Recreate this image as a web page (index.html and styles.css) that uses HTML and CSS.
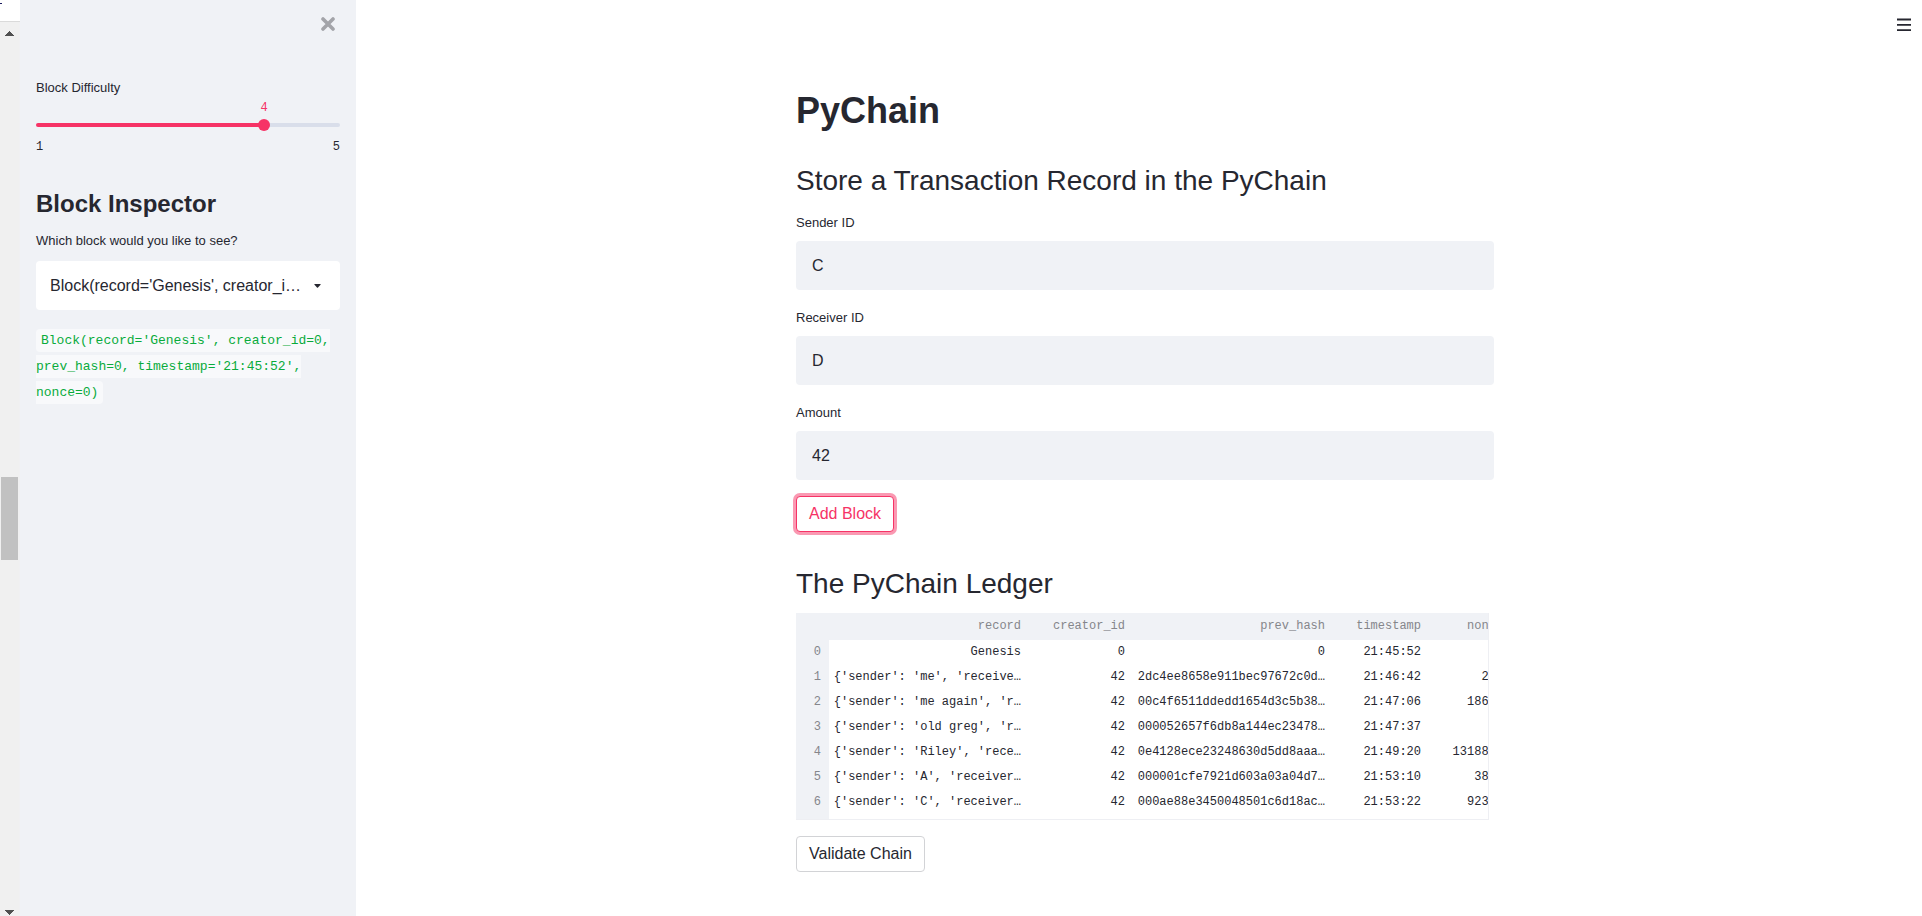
FILE: index.html
```html
<!DOCTYPE html>
<html lang="en">
<head>
<meta charset="utf-8">
<title>PyChain</title>
<link rel="stylesheet" href="styles.css">
</head>
<body>
<div class="app">
  <div class="gutter" aria-hidden="true">
    <div class="gutter-corner"><span class="gutter-mark"></span></div>
    <div class="scrollbar">
      <svg width="9" height="5" viewBox="0 0 9 5"><path d="M4 0h1v1h1v1h1v1h1v1h1v1H0V4h1V3h1V2h1V1h1z" fill="#505050"/></svg>
      <div class="scroll-before"></div>
      <div class="scroll-thumb"></div>
      <div class="scroll-after"></div>
      <svg width="9" height="5" viewBox="0 0 9 5"><path d="M0 0h9v1H8v1H7v1H6v1H5v1H4V4H3V3H2V2H1V1H0z" fill="#505050"/></svg>
    </div>
  </div>

  <aside class="sidebar">
    <div class="sidebar-top">
      <button class="icon-button" type="button" aria-label="Close sidebar">
        <svg width="14" height="14" viewBox="0 0 14 14"><path d="M2 2l10 10M12 2L2 12" stroke="#a3a4a9" stroke-width="3.6" stroke-linecap="round"/></svg>
      </button>
    </div>
    <div class="slider">
      <label class="label" for="difficulty">Block Difficulty</label>
      <div class="slider-value"><output for="difficulty">4</output></div>
      <div class="slider-rail"><input id="difficulty" type="range" min="1" max="5" value="4"></div>
      <div class="slider-ticks"><span>1</span><span>5</span></div>
    </div>
    <h2 class="sidebar-title">Block Inspector</h2>
    <label class="label" for="block">Which block would you like to see?</label>
    <div class="select-box">
      <select id="block">
        <option>Block(record='Genesis', creator_id=0, prev_hash=0, timestamp='21:45:52', nonce=0)</option>
      </select>
      <svg class="caret" width="7" height="4" viewBox="0 0 7 4"><path d="M.2.6Q.1 0 .8 0h5.4q.7 0 .6.6L4 3.6q-.5.5-1 0z" fill="#262730"/></svg>
    </div>
    <p class="code-text"><code>Block(record='Genesis', creator_id=0, prev_hash=0, timestamp='21:45:52', nonce=0)</code></p>
  </aside>

  <main class="main">
    <button class="icon-button menu" type="button" aria-label="Menu">
      <svg width="14" height="14" viewBox="0 0 14 14"><path d="M0 2.5h14M0 7.8h14M0 13.1h14" stroke="#262730" stroke-width="1.8"/></svg>
    </button>
    <div class="content">
      <h1>PyChain</h1>
      <h2 class="section-title">Store a Transaction Record in the PyChain</h2>
      <div class="field">
        <label class="label" for="sender">Sender ID</label>
        <input id="sender" type="text" value="C">
      </div>
      <div class="field">
        <label class="label" for="receiver">Receiver ID</label>
        <input id="receiver" type="text" value="D">
      </div>
      <div class="field">
        <label class="label" for="amount">Amount</label>
        <input id="amount" type="text" value="42">
      </div>
      <button class="button button-active" type="button">Add Block</button>
      <h2 class="section-title ledger-title">The PyChain Ledger</h2>
      <div class="ledger">
        <table>
          <colgroup><col class="c-index"><col class="c-long"><col class="c-id"><col class="c-long"><col class="c-time"><col class="c-nonce"></colgroup>
          <thead>
            <tr><th></th><th>record</th><th>creator_id</th><th>prev_hash</th><th>timestamp</th><th>nonce</th></tr>
          </thead>
          <tbody>
            <tr><th>0</th><td>Genesis</td><td>0</td><td>0</td><td>21:45:52</td><td>0</td></tr>
            <tr><th>1</th><td>{'sender': 'me', 'receive…</td><td>42</td><td>2dc4ee8658e911bec97672c0d…</td><td>21:46:42</td><td>206</td></tr>
            <tr><th>2</th><td>{'sender': 'me again', 'r…</td><td>42</td><td>00c4f6511ddedd1654d3c5b38…</td><td>21:47:06</td><td>18652</td></tr>
            <tr><th>3</th><td>{'sender': 'old greg', 'r…</td><td>42</td><td>000052657f6db8a144ec23478…</td><td>21:47:37</td><td>22</td></tr>
            <tr><th>4</th><td>{'sender': 'Riley', 'rece…</td><td>42</td><td>0e4128ece23248630d5dd8aaa…</td><td>21:49:20</td><td>1318842</td></tr>
            <tr><th>5</th><td>{'sender': 'A', 'receiver…</td><td>42</td><td>000001cfe7921d603a03a04d7…</td><td>21:53:10</td><td>3860</td></tr>
            <tr><th>6</th><td>{'sender': 'C', 'receiver…</td><td>42</td><td>000ae88e3450048501c6d18ac…</td><td>21:53:22</td><td>92340</td></tr>
          </tbody>
        </table>
      </div>
      <button class="button" type="button">Validate Chain</button>
    </div>
  </main>
</div>
</body>
</html>
```
FILE: styles.css
```css
* { box-sizing: border-box; }

body {
  margin: 0;
  background: #fff;
  color: #262730;
  font: 16px/24px "Liberation Sans", Arial, sans-serif;
}

h1, h2, p { margin: 0; }

button, input, select { font: inherit; color: inherit; }

.app { display: flex; min-height: 100vh; }

/* page gutter with the outer scrollbar */
.gutter {
  flex: none;
  width: 20px;
  display: flex;
  flex-direction: column;
  background: #f0f0f2;
}
.gutter-corner {
  height: 22px;
  background: #fff;
  border-bottom: 1px solid #dadada;
}
.gutter-mark {
  display: block;
  width: 2px;
  height: 4px;
  border-bottom: 1px solid #1a1a5e;
}
.scrollbar {
  flex: 1;
  width: 19px;
  padding: 9px 1px 1px;
  display: flex;
  flex-direction: column;
  align-items: center;
  background: #f0f0f0;
}
.scroll-before { flex: 441; }
.scroll-thumb { flex: 83; width: 100%; background: #c1c1c1; }
.scroll-after { flex: 350; }

/* sidebar */
.sidebar {
  flex: none;
  width: 336px;
  padding: 12px 16px;
  background: #f0f2f6;
}
.sidebar-top {
  display: flex;
  justify-content: flex-end;
  margin-bottom: 40px;
}
.icon-button {
  display: flex;
  padding: 5px;
  border: 0;
  background: none;
}
.label { display: block; font-size: 13px; line-height: 24px; }

.slider-value, .slider-ticks {
  font: 12px/16px "Liberation Mono", monospace;
}
.slider-value { display: flex; justify-content: center; width: 150%; color: #f63366; }
.slider-rail {
  height: 4px;
  margin: 7px 0 12px;
  border-radius: 2px;
  background: linear-gradient(to right, #f63366 75%, #d9deea 75%);
}
.slider-rail input {
  display: block;
  appearance: none;
  width: calc(100% + 12px);
  height: 12px;
  margin: 0 -6px;
  background: none;
  transform: translateY(-4px);
}
.slider-rail input::-webkit-slider-thumb {
  appearance: none;
  width: 12px;
  height: 12px;
  border-radius: 50%;
  background: #f63366;
}
.slider-ticks { display: flex; justify-content: space-between; }

.sidebar-title { margin: 33px 0 9px; font-size: 24px; line-height: 32px; }

.select-box { display: grid; align-items: center; margin: 8px 0 18px; }
.select-box > * { grid-area: 1 / 1; }
.select-box select {
  appearance: none;
  width: 100%;
  height: 49px;
  padding: 0 38px 0 14px;
  border: 0;
  border-radius: 4px;
  background: #fff;
  text-overflow: ellipsis;
}
.caret { justify-self: end; margin-right: 19px; pointer-events: none; }

.code-text { font: 13px/26px "Liberation Mono", monospace; }
.code-text code {
  padding: 4px 5px;
  border-radius: 4px;
  background: #f8f9fb;
  color: #09ab3b;
  font: inherit;
}

/* main area */
.main {
  flex: 1;
  min-width: 0;
  padding: 12px 0 32px 12px;
  display: flex;
  flex-direction: column;
}
.menu { align-self: flex-end; margin-right: 6px; }
.content {
  width: 100%;
  max-width: 730px;
  margin: 51px auto 0;
  padding: 0 16px;
}
h1 { font-size: 36px; line-height: 48px; }
.section-title { margin: 26px 0 10px; font-size: 28px; line-height: 40px; font-weight: 400; }
.field { margin-bottom: 16px; }
.field input {
  display: block;
  width: 100%;
  height: 49px;
  margin-top: 6px;
  padding: 0 16px;
  border: 0;
  border-radius: 4px;
  background: #f0f2f6;
}
.button {
  padding: 5px 12px;
  border: 1px solid #d2d3d6;
  border-radius: 4px;
  background: #fff;
}
.button-active {
  border-color: #f63366;
  color: #f63366;
  box-shadow: 0 0 0 3px rgba(246, 51, 102, 0.5);
}

.ledger-title { margin: 32px 0 9px; }
.ledger {
  width: calc(100% - 5px);
  margin-bottom: 16px;
  overflow-x: auto;
  scrollbar-width: none;
  border: solid #eeeff3;
  border-width: 0 1px 1px 0;
}
table {
  width: 715px;
  table-layout: fixed;
  border-collapse: collapse;
  font: 12px/25px "Liberation Mono", monospace;
}
.c-index { width: 33px; }
.c-long { width: 200px; }
.c-id { width: 104px; }
.c-time { width: 96px; }
.c-nonce { width: 82px; }
th, td {
  height: 25px;
  padding: 0 8px 0 4px;
  text-align: right;
  vertical-align: top;
  white-space: nowrap;
}
thead th { line-height: 27px; }
tbody tr:last-child > * { height: 29px; }
th { background: #f0f2f6; color: #85868b; font-weight: 400; }
```
